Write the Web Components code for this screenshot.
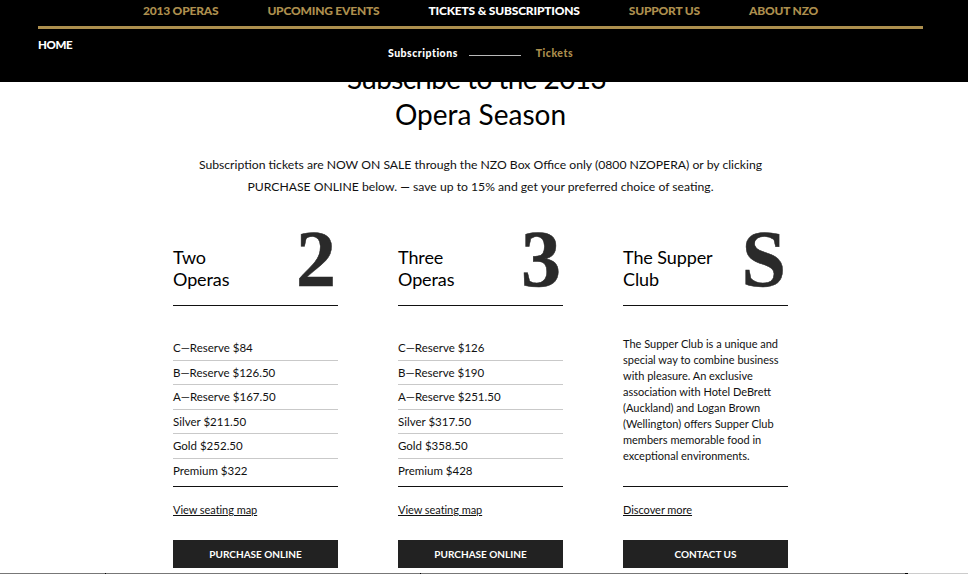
<!DOCTYPE html>
<html lang="en">
<head>
<meta charset="utf-8">
<title>Subscribe to the 2013 Opera Season</title>
<style>
  html, body { margin: 0; height: 574px; overflow: hidden; background: #fff; }
  body { font-family: "Lato", "Liberation Sans", sans-serif; color: #000; }
  price-row:last-child { --row-border: none; }
  .tight { letter-spacing: -.6px; padding-right: 8px; }
</style>
</head>
<body>
<site-header></site-header>
<season-page>
  <page-intro>
    <span slot="title"><span class="tight">Subscribe to the 2013</span><br>Opera Season</span>
    Subscription tickets are NOW ON SALE through the NZO Box Office only (0800 NZOPERA) or by clicking<br>
    PURCHASE ONLINE below. — save up to 15% and get your preferred choice of seating.
  </page-intro>
  <card-list>
    <price-card numeral="2" link="View seating map" action="PURCHASE ONLINE">
      <span slot="title">Two<br>Operas</span>
      <price-row>C—Reserve $84</price-row>
      <price-row>B—Reserve $126.50</price-row>
      <price-row>A—Reserve $167.50</price-row>
      <price-row>Silver $211.50</price-row>
      <price-row>Gold $252.50</price-row>
      <price-row>Premium $322</price-row>
    </price-card>
    <price-card numeral="3" link="View seating map" action="PURCHASE ONLINE">
      <span slot="title">Three<br>Operas</span>
      <price-row>C—Reserve $126</price-row>
      <price-row>B—Reserve $190</price-row>
      <price-row>A—Reserve $251.50</price-row>
      <price-row>Silver $317.50</price-row>
      <price-row>Gold $358.50</price-row>
      <price-row>Premium $428</price-row>
    </price-card>
    <price-card numeral="S" link="Discover more" action="CONTACT US">
      <span slot="title">The Supper<br>Club</span>
      <club-note>The Supper Club is a unique and<br>special way to combine business<br>with pleasure. An exclusive<br>association with Hotel DeBrett<br>(Auckland) and Logan Brown<br>(Wellington) offers Supper Club<br>members memorable food in<br>exceptional environments.</club-note>
    </price-card>
  </card-list>
</season-page>

<script>
class SiteHeader extends HTMLElement {
  constructor() {
    super();
    this.attachShadow({mode: 'open'});
    this.shadowRoot.innerHTML = `
      <style>
        :host {
          display: block;
          position: absolute;
          top: 0;
          left: 0;
          right: 0;
          height: 82px;
          background: #000;
          z-index: 2;
          box-sizing: border-box;
          padding: 0 45px 0 38px;
          font-weight: 900;
          font-size: 12px;
        }
        nav {
          display: flex;
          justify-content: center;
          gap: 49px;
          height: 26px;
          line-height: 21px;
          letter-spacing: -.2px;
          color: #ad8f4e;
          border-bottom: 3px solid #ad8f4e;
        }
        .on { color: #fff; }
        .row { display: grid; grid-template-columns: 1fr auto 1fr; }
        .home { color: #fff; font-size: 11.5px; letter-spacing: -.4px; line-height: 14px; padding-top: 9px; }
        .sub {
          display: flex;
          align-items: center;
          height: 14px;
          margin-top: 17px;
          font-size: 10.5px;
          letter-spacing: .5px;
          color: #ad8f4e;
        }
        .sub b { color: #fff; font-weight: inherit; }
        .sub i { width: 52px; height: 1px; background: #b9b9b9; margin: 4px 15px 0 11px; }
      </style>
      <nav>
        <span>2013 OPERAS</span>
        <span>UPCOMING EVENTS</span>
        <span class="on">TICKETS &amp; SUBSCRIPTIONS</span>
        <span>SUPPORT US</span>
        <span>ABOUT NZO</span>
      </nav>
      <div class="row">
        <span class="home">HOME</span>
        <div class="sub"><b>Subscriptions</b><i></i><span>Tickets</span></div>
      </div>`;
  }
}

class SeasonPage extends HTMLElement {
  constructor() {
    super();
    this.attachShadow({mode: 'open'});
    this.shadowRoot.innerHTML = `
      <style>
        :host { display: block; width: 961px; height: 574px; box-sizing: border-box; padding-top: 60px; }
        .foot {
          height: 1px;
          width: 968px;
          margin-top: 5px;
          background: linear-gradient(to right,
            #777 105px, #000 105px, #000 106px, #777 106px,
            #777 420px, #000 420px, #000 421px, #777 421px,
            #777 905px, #000 905px, #000 908px, #ccc 908px);
        }
      </style>
      <slot></slot>
      <div class="foot"></div>`;
  }
}

class PageIntro extends HTMLElement {
  constructor() {
    super();
    this.attachShadow({mode: 'open'});
    this.shadowRoot.innerHTML = `
      <style>
        :host { display: block; text-align: center; }
        h1 { margin: 0; font-size: 28px; font-weight: 400; line-height: 36px; }
        p { margin: 22px 0 0; font-size: 12.2px; line-height: 22px; color: #111; }
      </style>
      <h1><slot name="title"></slot></h1>
      <p><slot></slot></p>`;
  }
}

class CardList extends HTMLElement {
  constructor() {
    super();
    this.attachShadow({mode: 'open'});
    this.shadowRoot.innerHTML = `
      <style>
        :host { display: grid; grid-template-columns: repeat(3, 165px); column-gap: 60px; justify-content: center; margin-top: 25px; }
      </style>
      <slot></slot>`;
  }
}

class PriceCard extends HTMLElement {
  constructor() {
    super();
    this.attachShadow({mode: 'open'});
    this.shadowRoot.innerHTML = `
      <style>
        :host { display: block; }
        header {
          display: flex;
          justify-content: space-between;
          align-items: flex-end;
          height: 83px;
          box-sizing: border-box;
          border-bottom: 1px solid #111;
          padding-bottom: 15px;
        }
        h2 { margin: 0; font-size: 18px; font-weight: 400; line-height: 22px; letter-spacing: -.1px; }
        .num {
          font-family: "Liberation Serif", serif;
          font-weight: 700;
          font-size: 80px;
          line-height: 56px;
          height: 56px;
          color: #2a2a2a;
          -webkit-text-stroke: .5px #2a2a2a;
          margin: 0 2px 3px 0;
        }
        .body { height: 181px; box-sizing: border-box; border-bottom: 1px solid #111; padding-top: 30px; }
        a {
          display: block;
          margin-top: 15px;
          font-size: 11px;
          line-height: 16px;
          letter-spacing: -.05px;
          color: #111;
          text-decoration: underline;
        }
        button {
          display: block;
          width: 100%;
          height: 28px;
          margin: 22px 0 0;
          padding: 0;
          border: 0;
          background: #222;
          color: #fff;
          font: 700 10px "Lato", "Liberation Sans", sans-serif;
        }
      </style>
      <header>
        <h2><slot name="title"></slot></h2>
        <span class="num"></span>
      </header>
      <div class="body"><slot></slot></div>
      <a href="#"></a>
      <button type="button"></button>`;
  }

  connectedCallback() {
    this.shadowRoot.querySelector('.num').textContent = this.getAttribute('numeral');
    this.shadowRoot.querySelector('a').textContent = this.getAttribute('link');
    this.shadowRoot.querySelector('button').textContent = this.getAttribute('action');
  }
}

class PriceRow extends HTMLElement {
  constructor() {
    super();
    this.attachShadow({mode: 'open'});
    this.shadowRoot.innerHTML = `
      <style>
        :host {
          display: block;
          height: 24.5px;
          box-sizing: border-box;
          border-bottom: var(--row-border, 1px solid #c9c9c9);
          font-size: 11.5px;
          line-height: 24px;
          color: #111;
        }
      </style>
      <slot></slot>`;
  }
}

class ClubNote extends HTMLElement {
  constructor() {
    super();
    this.attachShadow({mode: 'open'});
    this.shadowRoot.innerHTML = `
      <style>
        :host { display: block; font-size: 11px; line-height: 16px; color: #111; }
      </style>
      <slot></slot>`;
  }
}

customElements.define('site-header', SiteHeader);
customElements.define('season-page', SeasonPage);
customElements.define('page-intro', PageIntro);
customElements.define('card-list', CardList);
customElements.define('price-card', PriceCard);
customElements.define('price-row', PriceRow);
customElements.define('club-note', ClubNote);
</script>
</body>
</html>
